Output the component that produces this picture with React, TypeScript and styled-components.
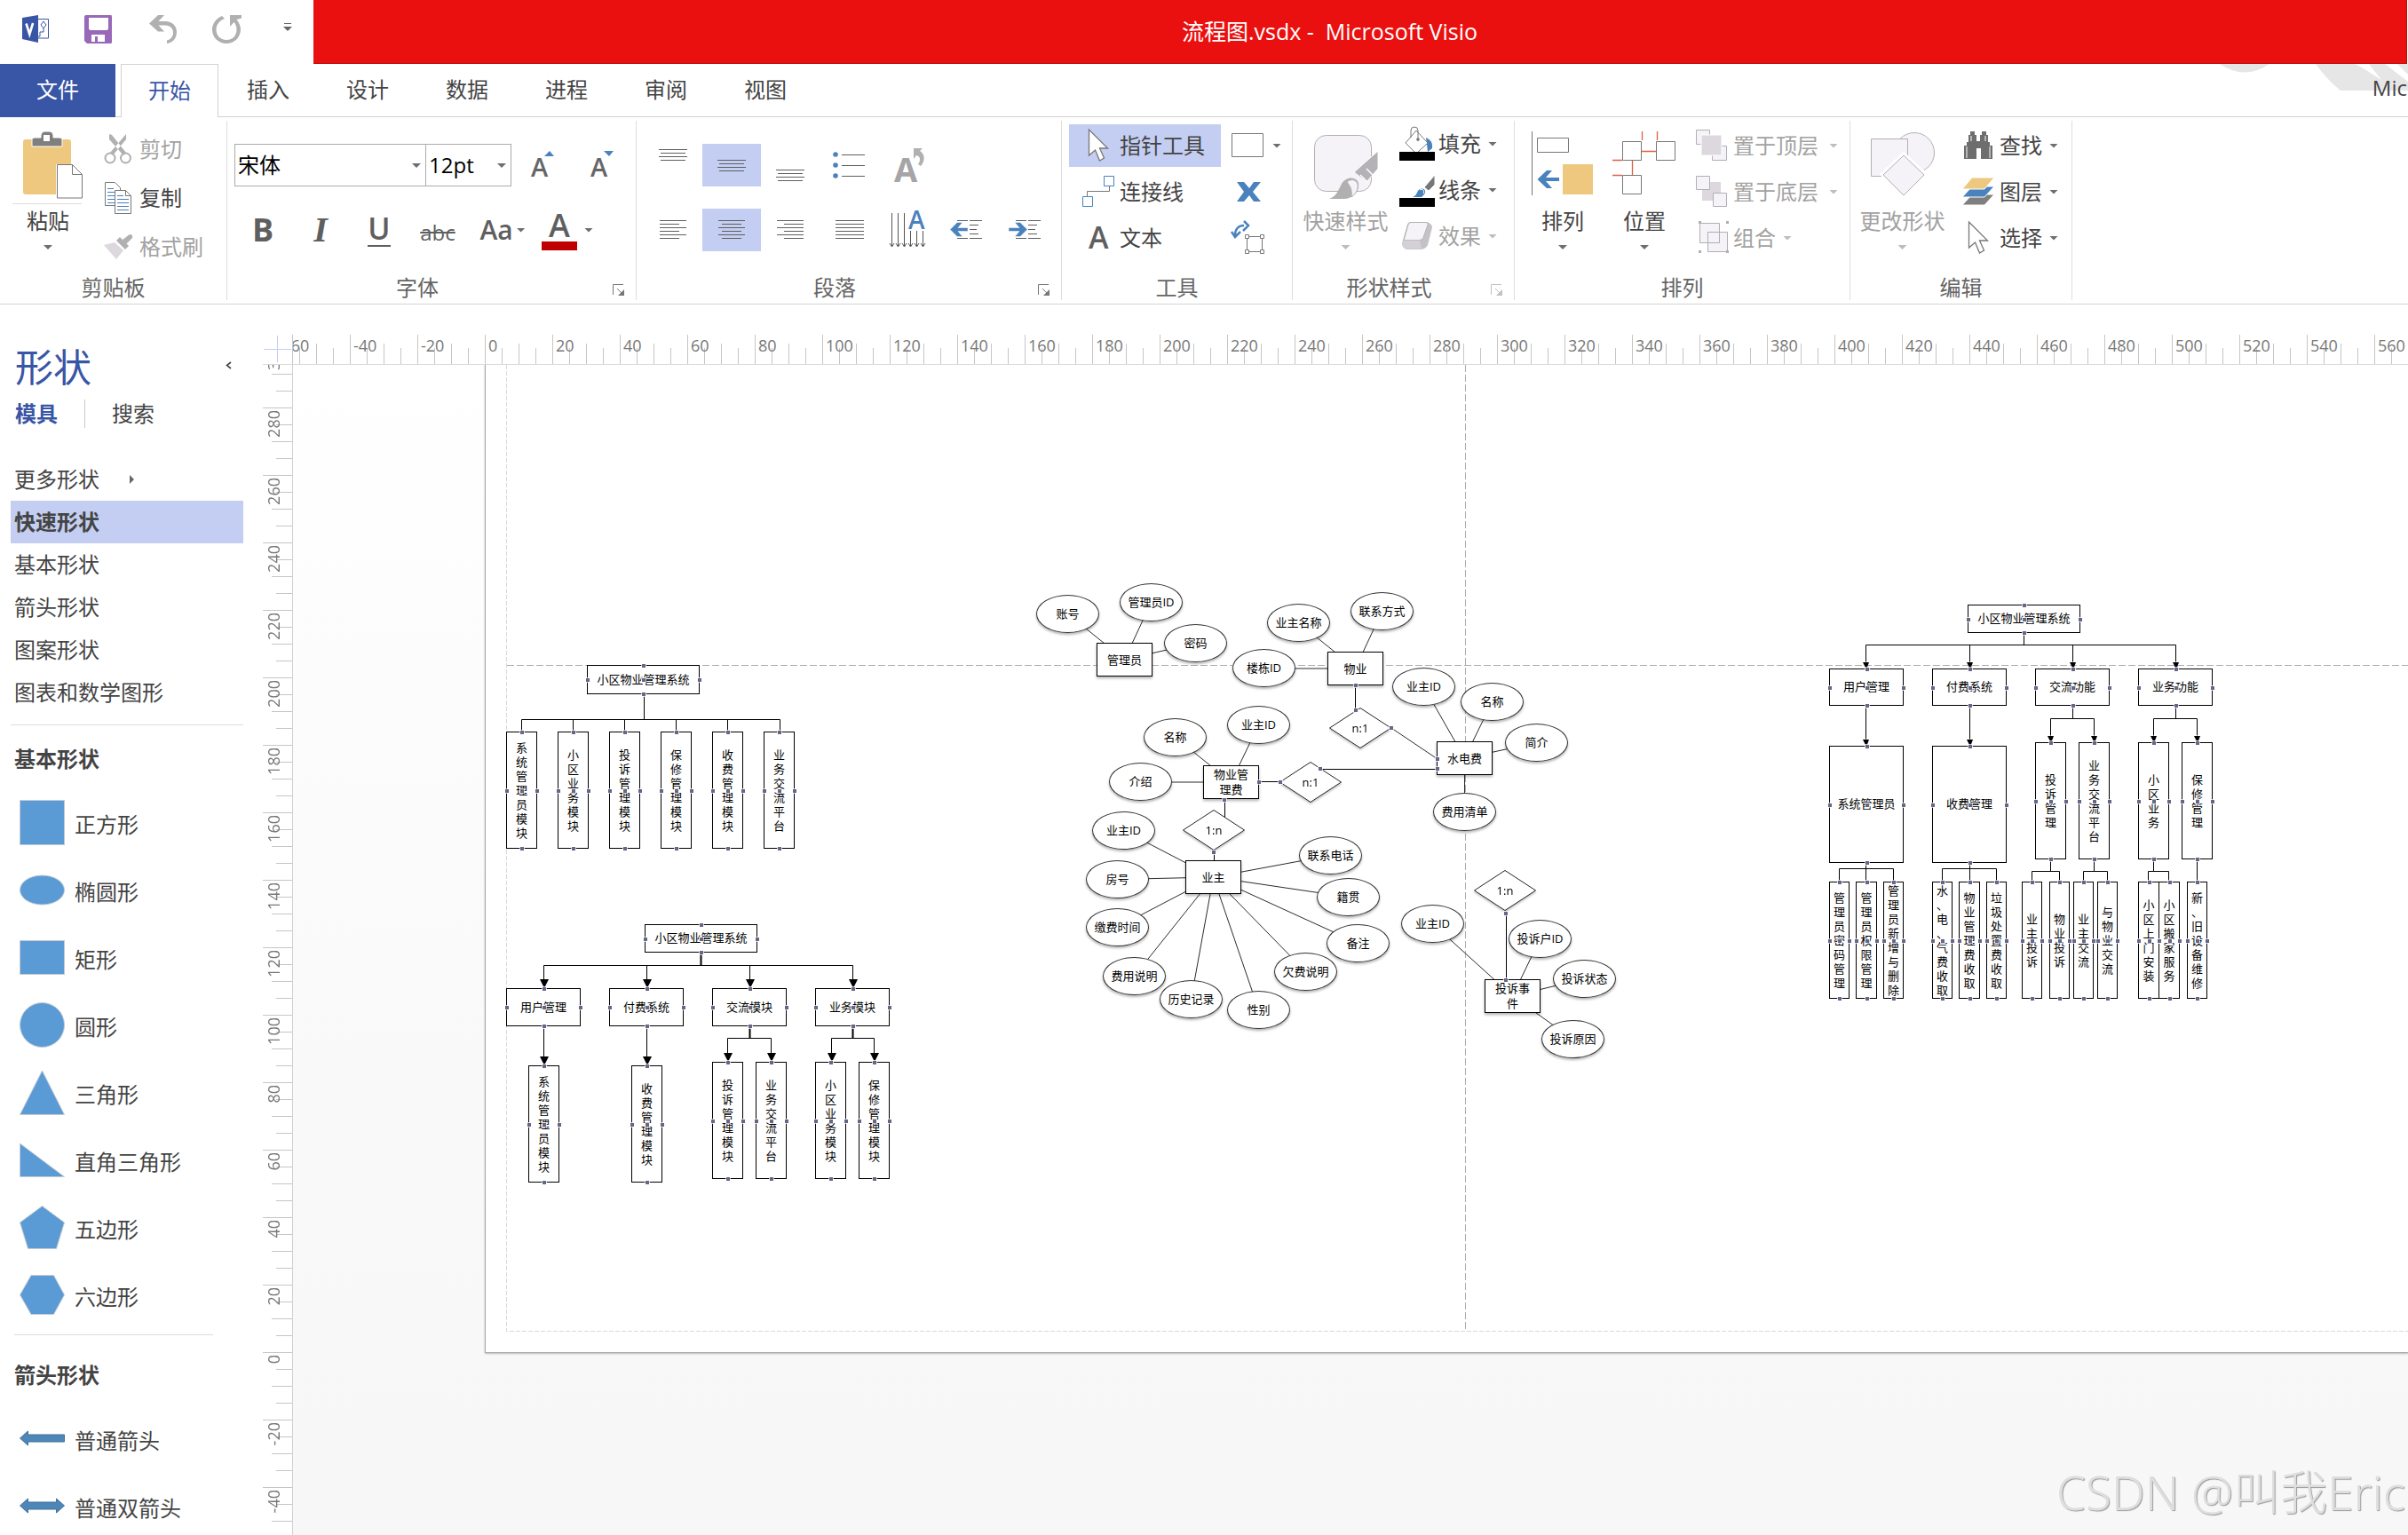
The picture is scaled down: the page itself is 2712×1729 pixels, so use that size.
import React from "react";
import styled, { createGlobalStyle, css } from "styled-components";

const GlobalStyle = createGlobalStyle`
  *, *::before, *::after { box-sizing: border-box; }
  html, body { margin: 0; padding: 0; background: #fff; overflow: hidden; }
  body {
    font-family: "Open Sans", "Noto Sans", "Noto Sans CJK SC", sans-serif;
    font-size: 24px;
    line-height: 32px;
    color: #444;
  }
  button, select, input { font: inherit; color: inherit; }
  h1, h2, p, ul { margin: 0; padding: 0; font-weight: 400; }
  ul { list-style: none; }
  svg { overflow: visible; }
`;

/* ---------- shell ---------- */

const Shell = styled.div`
  display: flex;
  flex-direction: column;
  width: 100%;
  height: 100vh;
  overflow: hidden;
  background: #fff;
`;

const plainButton = css`
  appearance: none;
  border: 0;
  margin: 0;
  padding: 0;
  background: transparent;
  cursor: pointer;
  text-align: inherit;
  white-space: nowrap;
`;

/* ---------- title bar ---------- */

const TitleBar = styled.header`
  display: flex;
  flex: none;
  height: 72px;
  padding-right: 1px;
`;

const QuickAccess = styled.div`
  display: flex;
  align-items: flex-start;
  width: 353px;
  padding: 16px 0 0 25px;
`;

const QuickButton = styled.button<{ $w: number }>`
  ${plainButton}
  width: ${(p) => p.$w}px;
  height: 34px;
  svg { display: block; }
`;

const TitleText = styled.h1`
  flex: 1;
  display: flex;
  align-items: center;
  justify-content: center;
  padding: 0 68px 2px 0;
  background: #ea100f;
  border: solid #b90d0d;
  border-width: 0 1px 1px 0;
  color: #fff;
  font-size: 25px;
  white-space: pre;
`;

/* ---------- ribbon tabs ---------- */

const TabRow = styled.nav`
  position: relative;
  display: flex;
  flex: none;
  height: 60px;
  border-bottom: 1px solid #d2d2d2;
`;

const TabButton = styled.button<{ $kind?: "file" | "active" }>`
  ${plainButton}
  width: 112px;
  height: 59px;
  padding-bottom: 2px;
  text-align: center;
  ${(p) =>
    p.$kind === "file" &&
    css`
      width: 130px;
      height: 60px;
      margin-right: 6px;
      background: #3955a5;
      color: #fff;
    `}
  ${(p) =>
    p.$kind === "active" &&
    css`
      width: 110px;
      height: 60px;
      border: 1px solid #d2d2d2;
      border-bottom: 0;
      background: #fff;
      color: #3955a5;
    `}
`;

const Backdrop = styled.svg`
  position: absolute;
  top: 0;
  right: 0;
`;

const Account = styled.a`
  position: relative;
  margin-left: auto;
  padding: 11px 1px 0 0;
  white-space: nowrap;
  color: #444;
  text-decoration: none;
`;

/* ---------- ribbon ---------- */

const RibbonBar = styled.section`
  display: flex;
  flex: none;
  height: 211px;
  padding: 4px 0;
  border-bottom: 1px solid #d2d2d2;
`;

const GroupBox = styled.div<{ $w: number }>`
  display: flex;
  flex-direction: column;
  flex: none;
  width: ${(p) => p.$w}px;
  border-right: 1px solid #dedede;
`;

const GroupBody = styled.div<{ $pad?: number }>`
  display: flex;
  flex: 1;
  padding-left: ${(p) => p.$pad ?? 0}px;
`;

const GroupFoot = styled.div`
  display: flex;
  height: 28px;
  color: #666;
  text-align: center;
  line-height: 28px;
  span { flex: 1; }
`;

const LauncherButton = styled.button<{ $dim?: boolean }>`
  ${plainButton}
  width: 14px;
  height: 14px;
  margin: 10px 12px 0 6px;
  opacity: ${(p) => (p.$dim ? 0.45 : 1)};
  svg { display: block; }
`;

const Stack = styled.div<{ $top?: number; $left?: number }>`
  display: flex;
  flex-direction: column;
  padding: ${(p) => p.$top ?? 4}px 0 0 ${(p) => p.$left ?? 0}px;
`;

const ToolButton = styled.button<{ $h?: number; $on?: boolean; $dim?: boolean; $pad?: number; $w?: number }>`
  ${plainButton}
  display: flex;
  align-items: center;
  width: ${(p) => (p.$w ? p.$w + "px" : "auto")};
  height: ${(p) => (p.$h ?? 52) - 4}px;
  margin-bottom: 4px;
  padding-left: ${(p) => p.$pad ?? 0}px;
  background: ${(p) => (p.$on ? "#c3cef2" : "transparent")};
  color: ${(p) => (p.$dim ? "#a2a2a2" : "#444")};
`;

const IconSlot = styled.span`
  display: flex;
  align-items: center;
  justify-content: center;
  width: 40px;
  height: 44px;
  margin-right: 4px;
`;

const Chevron = styled.i<{ $dim?: boolean; $gap?: number }>`
  display: block;
  width: 10px;
  height: 5px;
  margin-left: ${(p) => p.$gap ?? 8}px;
  background: ${(p) => (p.$dim ? "#bdbdbd" : "#6e6e6e")};
  clip-path: polygon(0 0, 100% 0, 50% 100%);
`;

const BigButton = styled.button<{ $w: number; $dim?: boolean }>`
  ${plainButton}
  display: flex;
  flex-direction: column;
  align-items: center;
  width: ${(p) => p.$w}px;
  padding-top: 12px;
  color: ${(p) => (p.$dim ? "#a2a2a2" : "#444")};
  > svg { display: block; height: 84px; margin-bottom: 1px; }
  > i { margin: 11px 0 0; }
`;

/* font + paragraph groups */

const RowStack = styled.div`
  display: flex;
  flex-direction: column;
  gap: 25px;
  padding-top: 26px;
`;

const Row = styled.div`
  display: flex;
  height: 48px;
`;

const ComboBox = styled.label<{ $w: number }>`
  position: relative;
  width: ${(p) => p.$w}px;
  height: 48px;
  border: 1px solid #ababab;
  & + & { border-left: 0; }
  > i {
    position: absolute;
    right: 5px;
    top: 21px;
    pointer-events: none;
  }
`;

const ComboSelect = styled.select`
  appearance: none;
  width: 100%;
  height: 100%;
  border: 0;
  padding: 0 20px 0 3px;
  background: #fff;
  color: #000;
`;

const IconButton = styled.button<{ $w?: number; $on?: boolean }>`
  ${plainButton}
  display: flex;
  align-items: center;
  justify-content: center;
  width: ${(p) => p.$w ?? 66}px;
  height: 48px;
  background: ${(p) => (p.$on ? "#c3cef2" : "transparent")};
  color: #5f5f5f;
`;

const Letter = styled.span<{ $style?: "bold" | "italic" | "under" | "strike" | "case" | "color" }>`
  display: block;
  line-height: 34px;
  ${(p) => p.$style === "bold" && css`font-size: 36px; font-weight: 700; line-height: 36px;`}
  ${(p) =>
    p.$style === "italic" &&
    css`font-family: "Liberation Serif", serif; font-size: 40px; font-style: italic; font-weight: 700;`}
  ${(p) =>
    p.$style === "under" &&
    css`font-size: 34px; font-weight: 600; height: 38px; border-bottom: 2px solid #5f5f5f;`}
  ${(p) => p.$style === "strike" && css`font-size: 24px; padding-top: 6px; text-decoration: line-through;`}
  ${(p) => p.$style === "case" && css`font-size: 30px; font-weight: 600;`}
  ${(p) =>
    p.$style === "color" &&
    css`width: 40px; text-align: center; font-size: 36px; font-weight: 600; line-height: 36px; border-bottom: 10px solid #c00000;`}
`;

/* ---------- workspace ---------- */

const Workspace = styled.main`
  display: flex;
  flex: 1;
  min-height: 0;
  overflow: hidden;
`;

const SidePane = styled.aside`
  flex: none;
  width: 296px;
  padding: 43px 22px 0 12px;
  overflow: hidden;
`;

const PaneHead = styled.div`
  display: flex;
  justify-content: space-between;
  height: 56px;
  padding: 0 12px 0 5px;
  h2 { font-size: 43px; line-height: 56px; color: #3955a5; }
`;

const CollapseButton = styled.button`
  ${plainButton}
  width: 8px;
  height: 42px;
`;

const PaneTabs = styled.div`
  display: flex;
  align-items: center;
  height: 32px;
  margin: 8px 0 34px 5px;
`;

const PaneTab = styled.button<{ $on?: boolean }>`
  ${plainButton}
  color: ${(p) => (p.$on ? "#3955a5" : "#444")};
  font-weight: ${(p) => (p.$on ? 700 : 400)};
  & + & {
    margin-left: 30px;
    padding-left: 30px;
    border-left: 1px solid #c8c8c8;
  }
`;

const StencilRow = styled.button<{ $on?: boolean }>`
  ${plainButton}
  display: flex;
  align-items: center;
  width: 100%;
  height: 48px;
  padding-left: 4px;
  background: ${(p) => (p.$on ? "#c3cef2" : "transparent")};
  font-weight: ${(p) => (p.$on ? 700 : 400)};
  svg { margin-left: 34px; }
`;

const Divider = styled.hr<{ $short?: boolean }>`
  height: 1px;
  border: 0;
  margin: ${(p) => (p.$short ? "6px 34px 21px 4px" : "12px 0 14px")};
  background: #dcdcdc;
`;

const StencilTitle = styled.h2`
  padding-left: 4px;
  font-size: 24px;
  line-height: 48px;
  font-weight: 700;
`;

const ShapeList = styled.ul`
  padding: 10px 0 0 10px;
`;

const ShapeItem = styled.li`
  display: flex;
  align-items: center;
  height: 76px;
  svg { flex: none; display: block; }
  span { margin: 4px 0 0 10px; }
`;

/* rulers */

const Board = styled.div`
  display: flex;
  flex: 1;
  flex-direction: column;
  min-width: 0;
`;

const TopStrip = styled.div`
  display: flex;
  flex: none;
  height: 68px;
  padding-top: 33px;
  border-bottom: 1px solid #d9d9d9;
`;

const Corner = styled.svg`
  flex: none;
  width: 34px;
  height: 34px;
`;

const HRuler = styled.div`
  display: flex;
  flex: 1;
  min-width: 0;
  overflow: hidden;
  > :first-child { margin-left: -12px; }
`;

const HCell = styled.div`
  position: relative;
  display: flex;
  align-items: flex-end;
  flex: none;
  width: 76px;
  height: 34px;
  color: #777;
  font-size: 18px;
`;

const HTick = styled.i<{ $len: number }>`
  flex: none;
  width: 19px;
  height: ${(p) => p.$len}px;
  border-left: 1px solid #c6c6c6;
`;

const HLabel = styled.span`
  position: absolute;
  left: 4px;
  top: 0;
  line-height: 26px;
`;

const Lower = styled.div`
  display: flex;
  flex: 1;
  min-height: 0;
`;

const VRuler = styled.div`
  flex: none;
  width: 34px;
  overflow: hidden;
  border-right: 1px solid #d0d0d0;
  > :first-child { margin-top: -28px; }
`;

const VCell = styled.div`
  position: relative;
  display: flex;
  flex-direction: column;
  align-items: flex-end;
  height: 76px;
  color: #777;
  font-size: 18px;
`;

const VTick = styled.i<{ $len: number }>`
  width: ${(p) => p.$len}px;
  height: 19px;
  border-top: 1px solid #c6c6c6;
`;

const VLabel = styled.span`
  position: absolute;
  left: 0;
  top: 3px;
  width: 24px;
  writing-mode: vertical-rl;
  transform: rotate(180deg);
  line-height: 24px;
`;

/* drawing surface */

const Surface = styled.div`
  position: relative;
  flex: 1;
  overflow: hidden;
  background: linear-gradient(#ffffff, #fafafa 50%, #f7f7f7);
`;

const Sheet = styled.div`
  position: relative;
  margin-left: 216px;
  height: 1113px;
  border: solid #a3a9af;
  border-width: 0 0 1px 1px;
  background: #fff;
  box-shadow: 0 1px 2px rgba(0, 0, 0, 0.25);
`;

const Layer = styled.svg`
  position: absolute;
  left: -1px;
  top: 0;
  pointer-events: none;
`;

const NodeBox = styled.div<{ $kind: Kind }>`
  position: absolute;
  display: flex;
  align-items: center;
  justify-content: center;
  color: #000;
  font-size: 13px;
  line-height: 16px;
  ${(p) =>
    p.$kind !== "diamond" &&
    css`
      background: #fff;
      border: 1px solid #000;
    `}
  ${(p) => p.$kind === "box" && css`padding-bottom: 2px;`}
  ${(p) => p.$kind === "ellipse" && css`border-radius: 50%; border-color: #333;`}
  ${(p) =>
    (p.$kind === "ellipse" || p.$kind === "entity") &&
    css`box-shadow: 0 2px 3px rgba(0, 0, 0, 0.3); line-height: 17px;`}
  ${(p) => p.$kind === "diamond" && css`filter: drop-shadow(0 2px 1px rgba(0, 0, 0, 0.22));`}
  svg { position: absolute; inset: 0; }
`;

const NodeText = styled.span<{ $kind: Kind }>`
  position: relative;
  text-align: center;
  white-space: ${(p) => (p.$kind === "entity" || p.$kind === "column" ? "normal" : "nowrap")};
  ${(p) => p.$kind === "entity" && css`max-width: 42px; line-break: anywhere;`}
  ${(p) => p.$kind === "column" && css`width: 13px; line-break: anywhere;`}
`;

const Watermark = styled.p`
  position: absolute;
  right: 3px;
  bottom: 13px;
  font-family: "Noto Sans", "Noto Sans CJK SC", sans-serif;
  font-size: 53px;
  font-weight: 300;
  line-height: 70px;
  color: #dedede;
  text-shadow: 1px 1px 1px #9a9a9a;
  white-space: nowrap;
`;

/* ---------- diagram data (document coordinates) ---------- */

type Kind = "box" | "column" | "ellipse" | "entity" | "diamond";
type Node = { k: Kind; t: string; x: number; y: number; w: number; h: number };
type Pt = [number, number];

const ORIGIN = { x: 546, y: 411 };

const box = (t: string, x: number, y: number, w: number, h: number): Node => ({ k: "box", t, x, y, w, h });
const col = (t: string, x: number, y: number, w: number, h: number): Node => ({ k: "column", t, x, y, w, h });
const ell = (t: string, cx: number, cy: number): Node => ({ k: "ellipse", t, x: cx - 35, y: cy - 21, w: 71, h: 43 });
const ent = (t: string, x: number, y: number): Node => ({ k: "entity", t, x, y, w: 63, h: 38 });
const dia = (t: string, cx: number, cy: number): Node => ({ k: "diamond", t, x: cx - 35, y: cy - 23, w: 70, h: 46 });

const treeNodes: Node[] = [
  box("小区物业管理系统", 661, 749, 127, 33),
  ...["系统管理员模块", "小区业务模块", "投诉管理模块", "保修管理模块", "收费管理模块", "业务交流平台"].map((t, i) =>
    col(t, 570 + 58 * i, 824, 35, 132)
  ),
  box("小区物业管理系统", 726, 1041, 127, 32),
  ...["用户管理", "付费系统", "交流模块", "业务模块"].map((t, i) => box(t, 570 + 116 * i, 1113, 84, 43)),
  col("系统管理员模块", 595, 1200, 35, 132),
  col("收费管理模块", 711, 1200, 35, 132),
  col("投诉管理模块", 802, 1196, 35, 132),
  col("业务交流平台", 851, 1196, 35, 132),
  col("小区业务模块", 918, 1196, 35, 132),
  col("保修管理模块", 967, 1196, 35, 132),
  box("小区物业管理系统", 2216, 681, 127, 32),
  ...["用户管理", "付费系统", "交流功能", "业务功能"].map((t, i) => box(t, 2060 + 116 * i, 753, 84, 42)),
  box("系统管理员", 2060, 840, 84, 132),
  box("收费管理", 2176, 840, 84, 132),
  col("投诉管理", 2292, 836, 35, 132),
  col("业务交流平台", 2341, 836, 35, 132),
  col("小区业务", 2408, 836, 35, 132),
  col("保修管理", 2457, 836, 35, 132),
  col("管理员密码管理", 2060, 993, 23, 132),
  col("管理员权限管理", 2090, 993, 24, 132),
  col("管理员新增与删除", 2121, 993, 23, 132),
  col("水、电、气费收取", 2176, 993, 23, 132),
  col("物业管理费收取", 2206, 993, 24, 132),
  col("垃圾处置费收取", 2237, 993, 23, 132),
  col("业主投诉", 2277, 993, 23, 132),
  col("物业投诉", 2308, 993, 23, 132),
  col("业主交流", 2335, 993, 23, 132),
  col("与物业交流", 2362, 993, 23, 132),
  col("小区上门安装", 2408, 993, 24, 132),
  col("小区搬家服务", 2431, 993, 24, 132),
  col("新、旧设备维修", 2463, 993, 23, 132),
];

const admin = ent("管理员", 1235, 724);
const estate = ent("物业", 1495, 734);
const utility = ent("水电费", 1618, 835);
const fee = ent("物业管理费", 1355, 862);
const owner = ent("业主", 1335, 969);
const complaint = ent("投诉事件", 1672, 1103);

const entityLinks: [Node, Node[]][] = [
  [admin, [ell("账号", 1202, 691), ell("管理员ID", 1296, 678), ell("密码", 1346, 724)]],
  [estate, [ell("业主名称", 1462, 701), ell("联系方式", 1556, 688), ell("楼栋ID", 1423, 752)]],
  [utility, [ell("业主ID", 1603, 773), ell("名称", 1680, 790), ell("简介", 1730, 836), ell("费用清单", 1649, 914)]],
  [fee, [ell("名称", 1323, 830), ell("业主ID", 1417, 816), ell("介绍", 1284, 880)]],
  [
    owner,
    [
      ell("业主ID", 1265, 935),
      ell("房号", 1258, 990),
      ell("缴费时间", 1258, 1044),
      ell("费用说明", 1277, 1099),
      ell("历史记录", 1341, 1125),
      ell("性别", 1417, 1137),
      ell("欠费说明", 1470, 1094),
      ell("备注", 1529, 1062),
      ell("籍贯", 1518, 1010),
      ell("联系电话", 1498, 963),
    ],
  ],
  [
    complaint,
    [ell("业主ID", 1613, 1040), ell("投诉户ID", 1734, 1057), ell("投诉状态", 1784, 1102), ell("投诉原因", 1771, 1170)],
  ],
];

const erNodes: Node[] = [
  dia("n:1", 1532, 820),
  dia("n:1", 1476, 881),
  dia("1:n", 1367, 935),
  dia("1:n", 1695, 1003),
  ...entityLinks.flatMap(([e, list]) => [...list, e]),
];

/* connectors drawn under the nodes */
const wires = [
  "M725 782V810M587 824V810H878V824M645 810V824M703 810V824M761 810V824M819 810V824",
  "M612 1104V1087H960V1104M728 1087V1104M844 1087V1104M612 1156V1192M728 1156V1192",
  "M819 1188V1169H868V1188M936 1188V1169H984V1188",
  "M2279 713V726M2101 745V726H2450V745M2218 726V745M2334 726V745M2101 795V832M2218 795V832",
  "M2334 795V809M2309 828V809H2358V828M2450 795V809M2425 828V809H2474V828",
  "M2101 972V993M2071 993V978H2132V993M2218 972V993M2187 993V978H2248V993",
  "M2309 968V981M2288 993V981H2319V993M2358 968V981M2346 993V981H2373V993M2425 968V981M2419 993V981H2442V993M2474 968V993",
  "M1526 771V802M1418 880H1442M1379 900V921M1367 958V969",
];
/* connectors that run over the nodes they are glued to */
const overWires = "M1487 866H1618M1696 1026V1104";
const heavyWires = "M789 1073V1087M844 1156V1169M960 1156V1169";

const bigArrows: Pt[] = [
  [612, 1113], [728, 1113], [844, 1113], [960, 1113],
  [612, 1200], [728, 1200], [819, 1196], [868, 1196], [936, 1196], [984, 1196],
];
const smallArrows: Pt[] = [
  [2101, 753], [2218, 753], [2334, 753], [2450, 753],
  [2101, 840], [2218, 840], [2309, 836], [2358, 836], [2425, 836], [2474, 836],
];

const erHandles: Pt[] = [
  [1527, 772], [1527, 800], [1567, 820], [1619, 855], [1619, 866], [1487, 866],
  [1418, 881], [1442, 881], [1379, 901], [1367, 960], [1696, 1029], [1696, 1104],
];

const handles: Pt[] = [
  ...treeNodes.flatMap((n): Pt[] => {
    const cx = n.x + Math.floor(n.w / 2) + 1;
    const cy = n.y + Math.floor(n.h / 2) + 1;
    return [[cx, n.y + 1], [cx, n.y + n.h], [n.x + 1, cy], [n.x + n.w, cy], [cx, cy]];
  }),
  ...erHandles,
];

const mid = (n: Node): Pt => [n.x + n.w / 2, n.y + n.h / 2];

function DiagramNode({ n }: { n: Node }) {
  return (
    <NodeBox $kind={n.k} style={{ left: n.x - ORIGIN.x - 1, top: n.y - ORIGIN.y, width: n.w, height: n.h }}>
      {n.k === "diamond" && (
        <svg width={n.w} height={n.h}>
          <path d={`M0.5 ${n.h / 2}L${n.w / 2} 0.5L${n.w - 0.5} ${n.h / 2}L${n.w / 2} ${n.h - 0.5}Z`} fill="#fff" stroke="#222" />
        </svg>
      )}
      <NodeText $kind={n.k}>{n.t}</NodeText>
    </NodeBox>
  );
}

function Diagram() {
  const view = `${ORIGIN.x} ${ORIGIN.y} 2166 1114`;
  return (
    <>
      <Layer width="2166" height="1114" viewBox={view} fill="none">
        <path d="M570.5 411V1499.5H2712" stroke="#d9d9d9" strokeDasharray="5 2" />
        <path d="M571 749.5H2712M1650.5 411V1499" stroke="#adadad" strokeDasharray="8 3" />
        <g stroke="#2b2b2b">
          {entityLinks.map(([e, list]) =>
            list.map((a) => {
              const [x1, y1] = mid(e);
              const [x2, y2] = mid(a);
              const flat = Math.abs(y1 - y2) < 2;
              return <line key={a.t + a.x} x1={x1} y1={y1} x2={x2} y2={flat ? y1 : y2} />;
            })
          )}
          <path d="M1567 820L1619 855" />
        </g>
        <g stroke="#000" transform="translate(0.5 0.5)">
          {wires.map((d) => (
            <path key={d} d={d} />
          ))}
          <path d={heavyWires} strokeWidth="2" />
        </g>
        <g fill="#000">
          {bigArrows.map(([x, y]) => (
            <path key={`${x}-${y}`} d={`M${x - 4} ${y - 10}h10l-5 10z`} />
          ))}
          {smallArrows.map(([x, y]) => (
            <path key={`${x}-${y}`} d={`M${x - 3} ${y - 7}h7l-3 8z`} />
          ))}
        </g>
      </Layer>
      {[...treeNodes, ...erNodes].map((n) => (
        <DiagramNode key={`${n.t}-${n.x}-${n.y}`} n={n} />
      ))}
      <Layer width="2166" height="1114" viewBox={view}>
        <path d={overWires} stroke="#000" transform="translate(0.5 0.5)" />
        {handles.map(([x, y], i) => (
          <g key={i}>
            <rect x={x - 3} y={y - 3} width="6" height="6" fill="#fff" fillOpacity="0.7" />
            <rect x={x - 2} y={y - 2} width="4" height="4" fill="#66668a" />
          </g>
        ))}
      </Layer>
    </>
  );
}

/* ---------- icons ---------- */

const lines = (rows: [number, number, number][], w: number, h: number) => (
  <svg width={w} height={h} shapeRendering="crispEdges" fill="#5f5f5f">
    {rows.map(([x, y, len]) => (
      <rect key={y} x={x} y={y} width={len} height="1" />
    ))}
  </svg>
);

const vAlign = (y: number) => lines([[0, y, 32], [2, y + 4, 28], [0, y + 8, 32], [2, y + 12, 28]], 32, 40);
const alignRows = (kind: "l" | "c" | "r" | "j") =>
  lines(
    [0, 1, 2, 3, 4, 5].map((i): [number, number, number] => {
      const len = kind === "j" ? 32 : i % 2 ? 22 : 30;
      const x = kind === "r" ? 31 - len : kind === "c" ? (32 - len) / 2 : 1;
      return [x, i * 4, len];
    }),
    32,
    22
  );

const VisioLogo = () => (
  <svg width="32" height="34" viewBox="0 -1 32 34">
    <path d="M14 4.500h15.500v21.500H14" fill="#fff" stroke="#3955a5" />
    <path d="M24 7l3 4-3 4-3-4zM24 15v4h-4v5h-3" fill="none" stroke="#3955a5" />
    <path d="M0 3l18-3v31L0 27z" fill="#3955a5" />
    <path d="M4.500 9.500l3.800 12 3.800-12.500" fill="none" stroke="#fff" strokeWidth="2.600" />
  </svg>
);
const SaveIcon = () => (
  <svg width="32" height="34" viewBox="0 -1 32 34">
    <path d="M2 0h28q1 0 1 2v28q0 2-1 2H3l-3-3V2q0-2 2-2z" fill="#9868b9" />
    <path d="M5 3h22v12q0 2-2 2H7q-2 0-2-2zM8 22h15v8h-8v-6h-3v6H8z" fill="#fff" />
  </svg>
);
const UndoIcon = () => (
  <svg width="33" height="34" viewBox="0 -1 33 34">
    <path d="M10 0h7l-6.500 7H18c8 0 13 5 13 12 0 8-5 12-11 13v-3.500c4-1 7-4 7-9 0-5-4-8-9-8h-7.500l6.500 7h-7L0 9.500z" fill="#b1b0b1" />
  </svg>
);
const RedoIcon = () => (
  <svg width="34" height="34" viewBox="0 -1 34 34">
    <path d="M11 1C4 4 0 10 0 16.500 0 25 7 32 16 32s16-7 16-16c0-4-2-8-4.500-11l5.500-1.500V0H20v13l4.500-5c2 2 3 5 3 8.500 0 7-5 11.500-11.500 11.500S4.500 23 4.500 16.500C4.500 11 8 6 14 4z" fill="#b1b0b1" />
  </svg>
);
const MoreIcon = () => (
  <svg width="10" height="34" viewBox="0 0 10 34">
    <path d="M1 10.500h8" stroke="#666" />
    <path d="M0 14h10l-5 5z" fill="#666" />
  </svg>
);
const LaunchIcon = () => (
  <svg width="14" height="14" viewBox="0 0 14 14">
    <path d="M0.500 12V0.500H12M5 5l6 6" fill="none" stroke="#777" />
    <path d="M13 6v7H6z" fill="#777" />
  </svg>
);
const PasteIcon = () => (
  <svg width="80" height="84" viewBox="0 0 80 84">
    <rect x="12" y="9" width="54" height="62" rx="3" fill="#edc87e" />
    <path d="M22 17V9q0-2 3-2h7V4q1-4 4-4h6q3 0 4 4v3h7q3 0 3 2v8z" fill="#7f7f7f" stroke="#fff" />
    <rect x="35" y="4" width="7" height="7" fill="#fff" />
    <path d="M49 37h19l12 11v28H49z" fill="#fff" />
    <path d="M50.500 37.500h17l11 11v26.500h-28zM67.500 37.500v11h11" fill="#fff" stroke="#777" />
    <path d="M0 81.500h78" stroke="#dcdcdc" />
  </svg>
);
const CutIcon = () => (
  <svg width="32" height="34" viewBox="0 0 32 34" fill="none" stroke="#b1b0b1">
    <path d="M6 0v6l16 18 3-3L9 1zM25 0v6L10 24l-3-3z" fill="#b1b0b1" stroke="none" />
    <circle cx="7" cy="27" r="5.500" strokeWidth="2" />
    <circle cx="24.500" cy="27" r="5.500" strokeWidth="2" />
  </svg>
);
const CopyIcon = () => (
  <svg width="32" height="36" viewBox="0 0 32 36" fill="#fff" stroke="#777">
    <path d="M1.500 0.500h11l6 6v20h-17z" />
    <path d="M4 7.500h7M4 11.500h8M4 15.500h8M4 19.500h8M4 23.500h8" stroke="#4a82bd" />
    <path d="M12.500 9.500h12l6 6v20h-18zM24.500 9.500v6h6" />
    <path d="M15 15.500h7M15 19.500h13M15 23.500h13M15 27.500h13M15 31.500h13" stroke="#4a82bd" />
  </svg>
);
const PainterIcon = () => (
  <svg width="33" height="28" viewBox="0 0 33 28">
    <path d="M0 12l12-3 10 9-8 10z" fill="#dcd8dd" />
    <path d="M14 7l4-4 10 10-4 4z" fill="#b1b0b1" />
    <path d="M21 6l8-6q4 0 3 4l-7 7z" fill="#b1b0b1" />
  </svg>
);
const SizedA = ({ up }: { up?: boolean }) => (
  <svg width="28" height="32" viewBox="0 0 28 32">
    <text x="1" y="29" fontSize="29" fontWeight="600" fill="#666">A</text>
    <path d={up ? "M16 6h11l-5-6z" : "M16 0h11l-5 6z"} fill="#4a82bd" />
  </svg>
);
const BulletIcon = () => (
  <svg width="36" height="30" viewBox="0 0 36 30">
    {[3, 15, 27].map((y) => (
      <g key={y}>
        <circle cx="3" cy={y} r="2.800" fill="#4a82bd" />
        <path d={`M10 ${y + 0.5}h26`} stroke="#5f5f5f" />
      </g>
    ))}
  </svg>
);
const RotateTextIcon = () => (
  <svg width="36" height="40" viewBox="0 0 36 40">
    <text x="0" y="39" fontSize="38" fontWeight="700" fill="#a5a4a6">A</text>
    <path d="M22 1v12l3-4c5 1 5 6 2 10l3 2c6-7 4-14-1-17l3-3z" fill="#b1b0b1" />
  </svg>
);
const VerticalTextIcon = () => (
  <svg width="42" height="42" viewBox="0 0 42 42" fill="none" stroke="#555">
    <path d="M3.500 2v37M10.500 2v37M17.500 2v37M24.500 22v17M31.500 22v17M38.500 22v17" />
    <path d="M1 36l2.500 4 2.500-4M8 36l2.500 4 2.500-4M15 36l2.500 4 2.500-4M22 36l2.500 4 2.500-4M29 36l2.500 4 2.500-4M36 36l2.500 4 2.500-4" />
    <text x="22" y="20" fontSize="28" fontWeight="600" fill="#4a82bd" stroke="none">A</text>
  </svg>
);
const IndentIcon = ({ right }: { right?: boolean }) => (
  <svg width="37" height="24" viewBox="0 0 37 24">
    <path d="M8 1.500h12M22 1.500h14M22 6.500h10M22 11.500h8M22 16.500h10M8 21.500h12M22 21.500h14" stroke="#5f5f5f" />
    <path
      d={right ? "M0 9.500h12l-5-6h6l8 8-8 8H7l5-6H0z" : "M20 9.500H9l5-6H8l-8 8 8 8h6l-5-6h11z"}
      fill="#4a82bd"
      stroke="#fff"
      strokeWidth="0.500"
    />
  </svg>
);
const PointerIcon = () => (
  <svg width="24" height="38" viewBox="0 0 24 38">
    <path d="M1.500 1v29l7-6 5 12 5-3-5-11h9z" fill="#fff" stroke="#777" strokeWidth="1.300" />
  </svg>
);
const ConnectorIcon = () => (
  <svg width="38" height="36" viewBox="0 0 38 36" fill="#fff">
    <path d="M6.500 24v-6.500h25V12" fill="none" stroke="#777" />
    <path d="M25.500 0.500h11v11h-11zM1.500 23.500h11v11h-11z" stroke="#4a82bd" />
  </svg>
);
const TextToolIcon = () => (
  <svg width="26" height="28" viewBox="0 0 26 28">
    <text x="2" y="26" fontSize="34" fontWeight="600" fill="#5f5f5f">A</text>
  </svg>
);
const SquareIcon = () => (
  <svg width="38" height="28" viewBox="0 0 38 28">
    <path d="M0.500 0.500h35v26h-35z" fill="#fff" stroke="#777" />
  </svg>
);
const CrossIcon = () => (
  <svg width="28" height="22" viewBox="0 0 28 22">
    <path d="M1 0h8l6 7 5-7h8l-9 11 9 11h-8l-5-7-6 7H1l8-11z" fill="#4a82bd" />
  </svg>
);
const PinIcon = () => (
  <svg width="38" height="38" viewBox="0 0 38 38">
    <path d="M4 16C4 9 8 5 14 5M14 0l5 5-6 6M0 12l4 6 6-6" fill="none" stroke="#4a82bd" strokeWidth="2.500" />
    <path d="M17.500 17.500h17v17h-17z" fill="none" stroke="#777" />
    <path d="M15.500 15.500h4v4h-4zM32.500 15.500h4v4h-4zM15.500 32.500h4v4h-4zM32.500 32.500h4v4h-4z" fill="#fff" stroke="#777" />
  </svg>
);
const QuickStyleIcon = () => (
  <svg width="74" height="84" viewBox="0 0 74 84">
    <rect x="1.500" y="4.500" width="64" height="63" rx="13" fill="#f5f2f8" stroke="#b1b0b1" />
    <path d="M73 22v20L60 57 46 46z" fill="#b4b2b6" stroke="#fff" />
    <path d="M60 42l8 8M53 49l8 8" stroke="#fff" strokeWidth="1.500" />
    <path d="M18 76c8-3 10-9 14-17 4-7 13-9 18-3 4 8-3 20-16 20z" fill="#b1b0b1" />
    <path d="M38 57c4-4 10-3 12 2 1 7-2 11-7 15 1-8-1-12-5-17z" fill="#f5f2f8" stroke="#b1b0b1" />
  </svg>
);
const FillIcon = () => (
  <svg width="40" height="38" viewBox="0 0 40 38">
    <path d="M30 12q8 3 7 12l-5 4z" fill="#4a82bd" />
    <path d="M19 4L7 18l12 12 13-12zM13 12V4q0-4 4-4t4 4v12" fill="#fff" stroke="#777" />
    <circle cx="21" cy="14" r="1.800" fill="#777" />
    <path d="M0 28h40v10H0z" />
  </svg>
);
const LineIcon = () => (
  <svg width="40" height="38" viewBox="0 0 40 38">
    <path d="M40 2v11l-7 7-5-4z" fill="#777" stroke="#fff" />
    <path d="M15 27c6-2 4-7 8-9 5-2 8 2 5 6l-3 3z" fill="#4a82bd" />
    <path d="M23 19c3-2 6 1 4 4" fill="none" stroke="#fff" />
    <path d="M0 28h40v10H0z" />
  </svg>
);
const EffectIcon = () => (
  <svg width="36" height="32" viewBox="0 0 36 32">
    <path d="M11 0h18q6 2 6 6l-5 20q-2 4-7 5H6q-5-2-5-7L7 3q1-3 4-3z" fill="#c4c2c6" />
    <path d="M11 0.500h17q3 0 2 3l-5 14q-1 3-4 3H3L8 3q1-2.500 3-2.500z" fill="#f5f2f8" stroke="#b1b0b1" />
    <path d="M3 20.500h18l2 10H6q-5-1-4-7z" fill="#d3d0d6" />
  </svg>
);
const ArrangeIcon = () => (
  <svg width="70" height="84" viewBox="0 0 70 84">
    <path d="M0.500 0v72" stroke="#777" />
    <path d="M6.500 7.500h35v16h-35z" fill="#fff" stroke="#777" />
    <path d="M35 37h34v34H35z" fill="#edc87e" />
    <path d="M31 52H16l7-8h-6L6.500 54 17 64h6l-7-8h15z" fill="#4a82bd" />
  </svg>
);
const PositionIcon = () => (
  <svg width="72" height="84" viewBox="0 0 72 84" fill="none">
    <path d="M33.500 0v10M50.500 0v10M33 22.500h17M0 32.500h11M22.500 33v16M0 49.500h11" stroke="#dc6141" strokeWidth="1.300" />
    <path d="M11.500 11.500h21v21h-21zM49.500 11.500h21v21h-21zM11.500 49.500h21v21h-21z" stroke="#777" fill="#fff" />
  </svg>
);
const FrontIcon = () => (
  <svg width="36" height="36" viewBox="0 0 36 36">
    <path d="M0.500 0.500h15v16h-15zM18.500 18.500h16v16h-16z" fill="#f5f2f8" stroke="#b1b0b1" />
    <path d="M6 6h23v23H6z" fill="#dcd8dd" stroke="#fff" />
  </svg>
);
const BackIcon = () => (
  <svg width="36" height="36" viewBox="0 0 36 36">
    <path d="M7 7h21v21H7z" fill="#dcd8dd" />
    <path d="M0.500 0.500h15v15h-15zM19.500 19.500h15v15h-15z" fill="#f5f2f8" stroke="#b1b0b1" />
  </svg>
);
const GroupIcon = () => (
  <svg width="32" height="38" viewBox="0 0 32 38" stroke="#b1b0b1">
    <path d="M2.500 2.500h22v22h-22zM11.500 12.500h22v22h-22z" fill="#f5f2f8" />
    <path d="M11.500 24.500v-12h13v12z" fill="none" />
    <path d="M1 0h3v3H1zM32 0h3v3h-3zM1 33h3v3H1zM32 33h3v3h-3z" fill="#b1b0b1" stroke="none" />
  </svg>
);
const ChangeShapeIcon = () => (
  <svg width="74" height="84" viewBox="0 0 74 84" fill="#f5f2f8" stroke="#b1b0b1">
    <circle cx="50" cy="24" r="22.500" />
    <path d="M1.500 8.500h41v42h-41z" />
    <path d="M38 26l24 22-24 25-24-25z" stroke="#fff" strokeWidth="5" />
    <path d="M38 27l23 22-23 23-23-23z" />
  </svg>
);
const FindIcon = () => (
  <svg width="34" height="32" viewBox="0 0 34 32" fill="#6e6e6e">
    <path d="M8 0h5v4h2v7h4V4h2V0h5v4h2v8h2v4h3v15H20V19h-5v12H1V16h3v-4h2V4h2z" />
    <path d="M4 17v13M30 17v13M9 5v6M25 5v6" stroke="#fff" />
  </svg>
);
const LayersIcon = () => (
  <svg width="36" height="32" viewBox="0 0 36 32" stroke="#fff">
    <path d="M11 19h25L25 31H0z" fill="#7f7f7f" />
    <path d="M11 10h25L25 22H0z" fill="#4a82bd" />
    <path d="M11 0h25L25 13H0z" fill="#edc87e" />
  </svg>
);

/* stencil previews */
const fillProps = { fill: "#5b9bd5", stroke: "#c5ccd3" };
const shapeItems: [string, React.ReactNode][] = [
  ["正方形", <rect x="0.5" y="0.5" width="50" height="50" />],
  ["椭圆形", <ellipse cx="25.5" cy="25.500" rx="25" ry="16.500" />],
  ["矩形", <rect x="0.5" y="6.500" width="50" height="38" />],
  ["圆形", <circle cx="25.5" cy="25.500" r="25" />],
  ["三角形", <path d="M25.500 1L50.500 50.500H0.500z" />],
  ["直角三角形", <path d="M0.500 7L50.500 44.500H0.500z" />],
  ["五边形", <path d="M25.500 1.500L50.500 20l-9 29.500h-32L0.500 20z" />],
  ["六边形", <path d="M13 3.500h25.500L50.500 25.500 38.500 47.500H13L0.500 25.500z" />],
];
const arrowItems: [string, React.ReactNode][] = [
  ["普通箭头", <path d="M0.500 25l9-8v4h41v8h-41v4z" />],
  ["普通双箭头", <path d="M0.500 25l9-8v4h32v-4l9 8-9 8v-4h-32v4z" />],
];

function ShapeEntry({ label, art, dark }: { label: string; art: React.ReactNode; dark?: boolean }) {
  return (
    <ShapeItem>
      <svg width="52" height="52" {...(dark ? { fill: "#4f86b8", stroke: "#41719c" } : fillProps)}>
        {art}
      </svg>
      <span>{label}</span>
    </ShapeItem>
  );
}

/* ---------- composition helpers ---------- */

function Group(props: { label: string; w: number; pad?: number; launcher?: "on" | "dim"; children: React.ReactNode }) {
  return (
    <GroupBox $w={props.w}>
      <GroupBody $pad={props.pad}>{props.children}</GroupBody>
      <GroupFoot>
        <span>{props.label}</span>
        {props.launcher && (
          <LauncherButton aria-label={props.label} $dim={props.launcher === "dim"}>
            <LaunchIcon />
          </LauncherButton>
        )}
      </GroupFoot>
    </GroupBox>
  );
}

function Tool(props: {
  icon: React.ReactNode;
  label?: string;
  name?: string;
  arrow?: boolean;
  arrowGap?: number;
  dim?: boolean;
  on?: boolean;
  h?: number;
  pad?: number;
  w?: number;
}) {
  return (
    <ToolButton aria-label={props.name} $dim={props.dim} $on={props.on} $h={props.h} $pad={props.pad} $w={props.w}>
      <IconSlot>{props.icon}</IconSlot>
      {props.label}
      {props.arrow && <Chevron $dim={props.dim} $gap={props.arrowGap} />}
    </ToolButton>
  );
}

function Big(props: { icon: React.ReactNode; label: string; w: number; dim?: boolean }) {
  return (
    <BigButton $w={props.w} $dim={props.dim}>
      {props.icon}
      {props.label}
      <Chevron $dim={props.dim} />
    </BigButton>
  );
}

const hMarks = Array.from({ length: 32 }, (_, i) => -60 + i * 20);
const vMarks = Array.from({ length: 19 }, (_, i) => 300 - i * 20);
const tickLengths = [33, 18, 23, 18];

export default function App() {
  return (
    <Shell>
      <GlobalStyle />
      <TitleBar>
        <QuickAccess>
          <QuickButton $w={70} aria-label="Visio"><VisioLogo /></QuickButton>
          <QuickButton $w={73} aria-label="保存"><SaveIcon /></QuickButton>
          <QuickButton $w={71} aria-label="撤销"><UndoIcon /></QuickButton>
          <QuickButton $w={80} aria-label="重复"><RedoIcon /></QuickButton>
          <QuickButton $w={10} aria-label="自定义"><MoreIcon /></QuickButton>
        </QuickAccess>
        <TitleText>{"流程图.vsdx -  Microsoft Visio"}</TitleText>
      </TitleBar>

      <TabRow>
        <Backdrop width="212" height="30" viewBox="0 0 212 30" fill="#e6e6e6">
          <path d="M0 0h56q-28 19-56 0zM108 0h46l28 18-14-18h10l26 24 8 6h-76Q120 17 108 0z" />
          <path d="M152 0l24 12-14-12z" fill="#fff" />
          <path d="M176 0h10l26 20v-8L200 0h12v30h-14z" />
        </Backdrop>
        <TabButton $kind="file">文件</TabButton>
        <TabButton $kind="active">开始</TabButton>
        {["插入", "设计", "数据", "进程", "审阅", "视图"].map((t) => (
          <TabButton key={t}>{t}</TabButton>
        ))}
        <Account href="#">Mic</Account>
      </TabRow>

      <RibbonBar>
        <Group label="剪贴板" w={256}>
          <Big icon={<PasteIcon />} label="粘贴" w={108} />
          <Stack $left={5} $top={6}>
            <Tool h={55} dim icon={<CutIcon />} label="剪切" />
            <Tool h={55} icon={<CopyIcon />} label="复制" />
            <Tool h={55} dim icon={<PainterIcon />} label="格式刷" />
          </Stack>
        </Group>

        <Group label="字体" w={461} pad={8} launcher="on">
          <RowStack>
            <Row>
              <ComboBox $w={216}>
                <ComboSelect aria-label="字体"><option>宋体</option></ComboSelect>
                <Chevron />
              </ComboBox>
              <ComboBox $w={96}>
                <ComboSelect aria-label="字号"><option>12pt</option></ComboSelect>
                <Chevron />
              </ComboBox>
              <IconButton $w={69} aria-label="增大字号"><SizedA up /></IconButton>
              <IconButton aria-label="减小字号"><SizedA /></IconButton>
            </Row>
            <Row>
              <IconButton $w={64}><Letter $style="bold">B</Letter></IconButton>
              <IconButton><Letter $style="italic">I</Letter></IconButton>
              <IconButton><Letter $style="under">U</Letter></IconButton>
              <IconButton><Letter $style="strike">abc</Letter></IconButton>
              <IconButton $w={80}><Letter $style="case">Aa</Letter><Chevron $gap={4} /></IconButton>
              <IconButton><Letter $style="color">A</Letter><Chevron /></IconButton>
            </Row>
          </RowStack>
        </Group>

        <Group label="段落" w={479} pad={8} launcher="on">
          <RowStack>
            <Row>
              <IconButton aria-label="顶端对齐">{vAlign(2)}</IconButton>
              <IconButton aria-label="中部对齐" $on>{vAlign(14)}</IconButton>
              <IconButton aria-label="底端对齐">{vAlign(25)}</IconButton>
              <IconButton aria-label="项目符号"><BulletIcon /></IconButton>
              <IconButton $w={72} aria-label="旋转文本"><RotateTextIcon /></IconButton>
            </Row>
            <Row>
              <IconButton aria-label="左对齐">{alignRows("l")}</IconButton>
              <IconButton aria-label="居中" $on>{alignRows("c")}</IconButton>
              <IconButton aria-label="右对齐">{alignRows("r")}</IconButton>
              <IconButton aria-label="两端对齐">{alignRows("j")}</IconButton>
              <IconButton aria-label="文字方向"><VerticalTextIcon /></IconButton>
              <IconButton aria-label="减少缩进"><IndentIcon /></IconButton>
              <IconButton aria-label="增加缩进"><IndentIcon right /></IconButton>
            </Row>
          </RowStack>
        </Group>

        <Group label="工具" w={260} pad={8}>
          <Stack>
            <Tool on w={171} pad={13} icon={<PointerIcon />} label="指针工具" />
            <Tool w={171} pad={13} icon={<ConnectorIcon />} label="连接线" />
            <Tool w={171} pad={13} icon={<TextToolIcon />} label="文本" />
          </Stack>
          <Stack $left={11}>
            <Tool name="矩形" icon={<SquareIcon />} arrow arrowGap={3} />
            <Tool name="连接点" icon={<CrossIcon />} />
            <Tool name="文本块" icon={<PinIcon />} />
          </Stack>
        </Group>

        <Group label="形状样式" w={250} launcher="dim">
          <Big icon={<QuickStyleIcon />} label="快速样式" w={119} dim />
          <Stack $left={1} $top={2}>
            <Tool icon={<FillIcon />} label="填充" arrow />
            <Tool icon={<LineIcon />} label="线条" arrow />
            <Tool icon={<EffectIcon />} label="效果" arrow dim />
          </Stack>
        </Group>

        <Group label="排列" w={378} pad={8}>
          <Big icon={<ArrangeIcon />} label="排列" w={92} />
          <Big icon={<PositionIcon />} label="位置" w={92} />
          <Stack $left={10}>
            <Tool icon={<FrontIcon />} label="置于顶层" arrow arrowGap={12} dim />
            <Tool icon={<BackIcon />} label="置于底层" arrow arrowGap={12} dim />
            <Tool icon={<GroupIcon />} label="组合" arrow dim />
          </Stack>
        </Group>

        <Group label="编辑" w={250}>
          <Big icon={<ChangeShapeIcon />} label="更改形状" w={117} dim />
          <Stack $left={7}>
            <Tool icon={<FindIcon />} label="查找" arrow />
            <Tool icon={<LayersIcon />} label="图层" arrow />
            <Tool icon={<PointerIcon />} label="选择" arrow />
          </Stack>
        </Group>
      </RibbonBar>

      <Workspace>
        <SidePane>
          <PaneHead>
            <h2>形状</h2>
            <CollapseButton aria-label="折叠">
              <svg width="7" height="9" viewBox="0 0 7 9" fill="none" stroke="#444" strokeWidth="1.600">
                <path d="M6 1L1.500 4.500 6 8" />
              </svg>
            </CollapseButton>
          </PaneHead>
          <PaneTabs>
            <PaneTab $on>模具</PaneTab>
            <PaneTab>搜索</PaneTab>
          </PaneTabs>
          <StencilRow>
            更多形状
            <svg width="6" height="10"><path d="M0 0l5 5-5 5z" fill="#666" /></svg>
          </StencilRow>
          <StencilRow $on>快速形状</StencilRow>
          <StencilRow>基本形状</StencilRow>
          <StencilRow>箭头形状</StencilRow>
          <StencilRow>图案形状</StencilRow>
          <StencilRow>图表和数学图形</StencilRow>
          <Divider />
          <StencilTitle>基本形状</StencilTitle>
          <ShapeList>
            {shapeItems.map(([label, art]) => (
              <ShapeEntry key={label} label={label} art={art} />
            ))}
          </ShapeList>
          <Divider $short />
          <StencilTitle>箭头形状</StencilTitle>
          <ShapeList>
            {arrowItems.map(([label, art]) => (
              <ShapeEntry key={label} label={label} art={art} dark />
            ))}
          </ShapeList>
        </SidePane>

        <Board>
          <TopStrip>
            <Corner viewBox="0 0 34 34">
              <path d="M1 17.500h31M16.500 2v30" stroke="#c3cef2" />
              <path d="M33.500 1v33" stroke="#c6c6c6" />
            </Corner>
            <HRuler>
              {hMarks.map((m) => (
                <HCell key={m}>
                  {tickLengths.map((len, i) => (
                    <HTick key={i} $len={len} />
                  ))}
                  <HLabel>{m}</HLabel>
                </HCell>
              ))}
            </HRuler>
          </TopStrip>
          <Lower>
            <VRuler>
              {vMarks.map((m) => (
                <VCell key={m}>
                  {tickLengths.map((len, i) => (
                    <VTick key={i} $len={len} />
                  ))}
                  <VLabel>{m}</VLabel>
                </VCell>
              ))}
            </VRuler>
            <Surface>
              <Sheet>
                <Diagram />
              </Sheet>
              <Watermark>CSDN @叫我Eric</Watermark>
            </Surface>
          </Lower>
        </Board>
      </Workspace>
    </Shell>
  );
}
